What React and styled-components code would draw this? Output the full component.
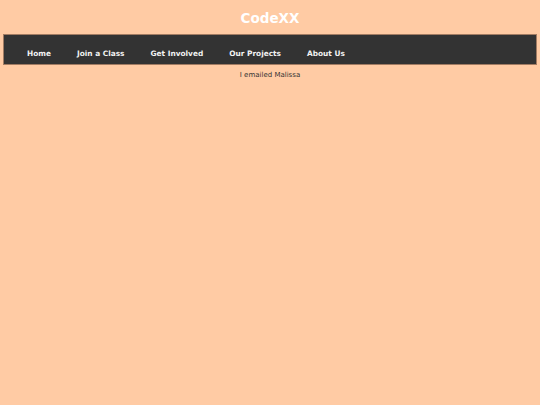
import React from 'react'
import styled, { createGlobalStyle } from 'styled-components'

const Global = createGlobalStyle`
	html, body {
		margin: 0;
		padding: 0;
		background: #ffcba4;
	}
	body {
		font-family: "DejaVu Sans", Verdana, sans-serif;
	}
`

const links = ['Home', 'Join a Class', 'Get Involved', 'Our Projects', 'About Us']

function App() {
	return (
		<Page>
			<Global />
			<Title>CodeXX</Title>
			<Nav>
				<Menu>
					{links.map((item, id) => (
						<MenuItem key={id}>
							<MenuLink href="#">{item}</MenuLink>
						</MenuItem>
					))}
				</Menu>
			</Nav>
			<Note>I emailed Malissa</Note>
		</Page>
	)
}

const Page = styled.div`
	padding: 0 3px;
`
const Title = styled.h1`
	margin: 0;
	padding-top: 10px;
	height: 25px;
	box-sizing: border-box;
	text-align: center;
	color: #ffffff;
	font-size: 13.5px;
	line-height: 17px;
	font-weight: bold;
`
const Nav = styled.nav`
	background: #333333;
	border: 1px solid #a27c63;
	height: 29px;
	margin-top: 9px;
`
const Menu = styled.ul`
	display: flex;
	list-style: none;
	margin: 0;
	padding: 11px 0 0 10px;
`
const MenuItem = styled.li`
	padding: 0 13px;
	line-height: 10px;
`
const MenuLink = styled.a`
	color: #f2f2f2;
	text-decoration: none;
	font-size: 7.4px;
	font-weight: bold;
`
const Note = styled.p`
	margin: 5px 0 0;
	text-align: center;
	color: #333333;
	font-size: 7px;
	line-height: 10px;
`

export default App
